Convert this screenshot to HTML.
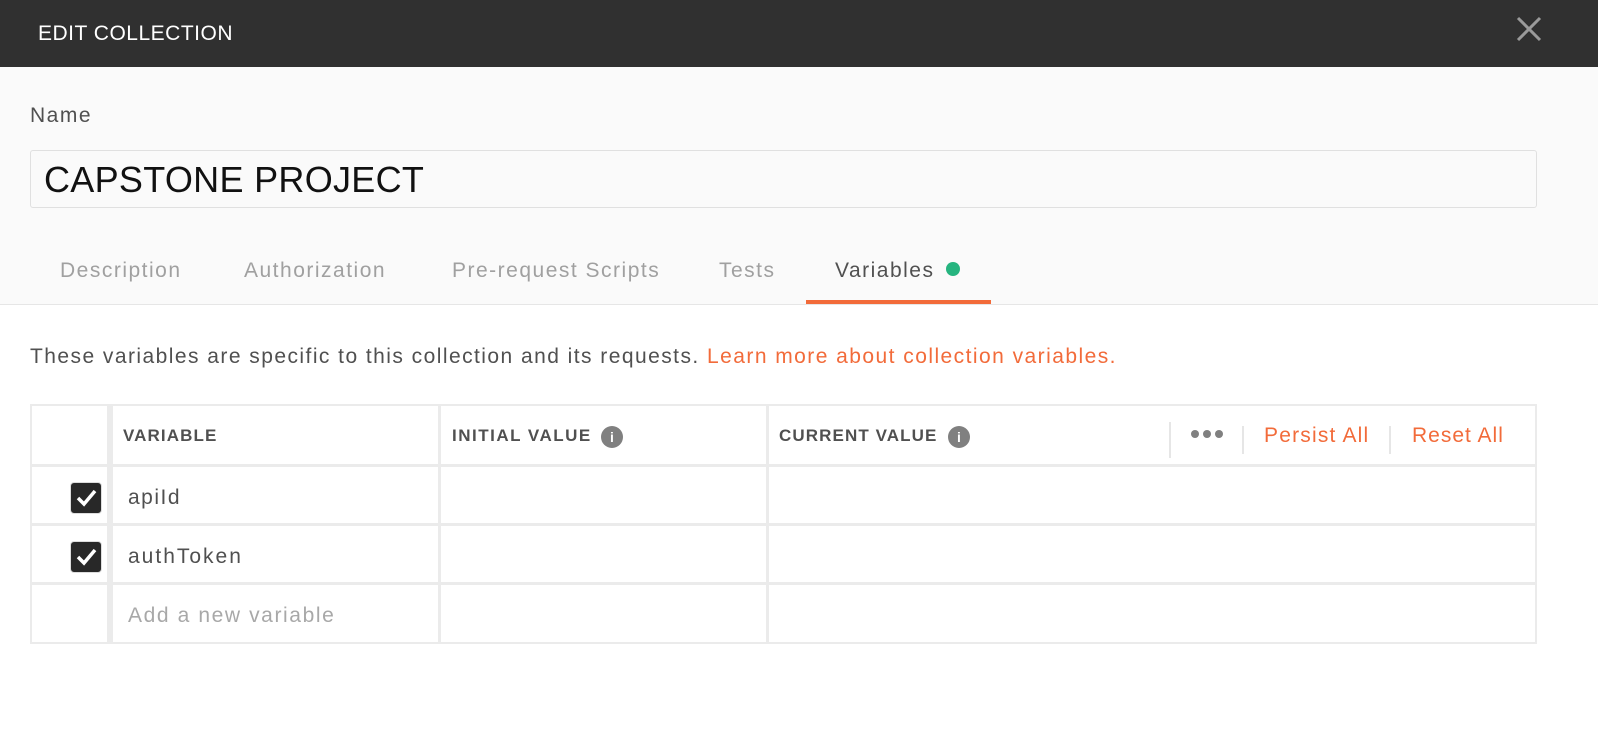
<!DOCTYPE html>
<html><head><style>
*{box-sizing:border-box;margin:0;padding:0}
body{width:1598px;height:738px;background:#fff;font-family:"Liberation Sans",sans-serif;position:relative;overflow:hidden;color:#505050}
.a{position:absolute}
.hdr{left:0;top:0;width:1598px;height:67px;background:#303030;color:#fff;font-size:21px;line-height:67px;padding-left:38px;letter-spacing:0.5px}
.top{left:0;top:67px;width:1598px;height:238px;background:#fafafa;border-bottom:1px solid #e6e6e6}
.tab{top:259px;font-size:21px;color:#a0a0a0;letter-spacing:1.5px}
.cell{position:absolute;background:#fff}
.chk{position:absolute;width:32px;height:32px;background:#282828;border-radius:4px;border:1px solid #ddd}
.th{font-size:17px;font-weight:bold;color:#505050;top:426px}
</style></head><body>
<div class="a hdr">EDIT COLLECTION</div>
<svg class="a" style="left:1516px;top:16px" width="26" height="26"><path d="M2 2L24 24M24 2L2 24" stroke="#9a9a9a" stroke-width="3"/></svg>
<div class="a top"></div>
<div class="a" style="left:30px;top:104px;font-size:21px;color:#505050;letter-spacing:1.5px">Name</div>
<div class="a" style="left:30px;top:150px;width:1507px;height:58px;border:1px solid #e0e0e0;border-radius:3px;background:#fafafa;font-size:36px;color:#111;line-height:58px;padding-left:13px;letter-spacing:0.3px">CAPSTONE PROJECT</div>
<div class="a tab" style="left:60px">Description</div>
<div class="a tab" style="left:244px">Authorization</div>
<div class="a tab" style="left:452px">Pre-request Scripts</div>
<div class="a tab" style="left:719px">Tests</div>
<div class="a tab" style="left:835px;color:#505050">Variables</div>
<div class="a" style="left:946px;top:262px;width:14px;height:14px;border-radius:50%;background:#26b47f"></div>
<div class="a" style="left:806px;top:300px;width:185px;height:4px;background:#f26b3a"></div>
<div class="a" style="left:30px;top:345px;font-size:21px;color:#505050;letter-spacing:1.45px;white-space:nowrap">These variables are specific to this collection and its requests. <span style="color:#f26b3a">Learn more about collection variables.</span></div>
<div class="a" style="left:30px;top:404px;width:1507px;height:240px;background:#ebebeb">
 <div class="cell" style="left:2px;top:2px;width:75px;height:58px"></div>
 <div class="cell" style="left:83px;top:2px;width:325px;height:58px"></div>
 <div class="cell" style="left:411px;top:2px;width:325px;height:58px"></div>
 <div class="cell" style="left:739px;top:2px;width:766px;height:58px"></div>
 <div class="cell" style="left:2px;top:63px;width:75px;height:56px"></div>
 <div class="cell" style="left:83px;top:63px;width:325px;height:56px"></div>
 <div class="cell" style="left:411px;top:63px;width:325px;height:56px"></div>
 <div class="cell" style="left:739px;top:63px;width:766px;height:56px"></div>
 <div class="cell" style="left:2px;top:122px;width:75px;height:56px"></div>
 <div class="cell" style="left:83px;top:122px;width:325px;height:56px"></div>
 <div class="cell" style="left:411px;top:122px;width:325px;height:56px"></div>
 <div class="cell" style="left:739px;top:122px;width:766px;height:56px"></div>
 <div class="cell" style="left:2px;top:181px;width:75px;height:57px"></div>
 <div class="cell" style="left:83px;top:181px;width:325px;height:57px"></div>
 <div class="cell" style="left:411px;top:181px;width:325px;height:57px"></div>
 <div class="cell" style="left:739px;top:181px;width:766px;height:57px"></div>
</div>
<div class="a th" style="left:123px;letter-spacing:1.1px">VARIABLE</div>
<div class="a th" style="left:452px;letter-spacing:1.5px">INITIAL VALUE</div>
<div class="a" style="left:601px;top:426px;width:22px;height:22px;border-radius:50%;background:#808080;color:#fff;font-size:14px;font-weight:bold;text-align:center;line-height:22px">i</div>
<div class="a th" style="left:779px;letter-spacing:1.1px">CURRENT VALUE</div>
<div class="a" style="left:948px;top:426px;width:22px;height:22px;border-radius:50%;background:#808080;color:#fff;font-size:14px;font-weight:bold;text-align:center;line-height:22px">i</div>
<div class="a" style="left:1169px;top:422px;width:2px;height:36px;background:#e6e6e6"></div>
<div class="a" style="left:1242px;top:426px;width:2px;height:28px;background:#e6e6e6"></div>
<div class="a" style="left:1389px;top:426px;width:2px;height:28px;background:#e6e6e6"></div>
<svg class="a" style="left:1190px;top:428px" width="34" height="12"><circle cx="5" cy="6" r="4" fill="#808080"/><circle cx="17" cy="6" r="4" fill="#808080"/><circle cx="29" cy="6" r="4" fill="#808080"/></svg>
<div class="a" style="left:1264px;top:424px;font-size:21px;color:#f26b3a;letter-spacing:1.2px">Persist All</div>
<div class="a" style="left:1412px;top:424px;font-size:21px;color:#f26b3a;letter-spacing:1px">Reset All</div>
<div class="chk" style="left:70px;top:482px"></div>
<svg class="a" style="left:70px;top:482px" width="32" height="32"><path d="M8 16l6 6 11-13" stroke="#fff" stroke-width="3.5" fill="none"/></svg>
<div class="chk" style="left:70px;top:541px"></div>
<svg class="a" style="left:70px;top:541px" width="32" height="32"><path d="M8 16l6 6 11-13" stroke="#fff" stroke-width="3.5" fill="none"/></svg>
<div class="a" style="left:128px;top:486px;font-size:21px;color:#505050;letter-spacing:1.5px">apiId</div>
<div class="a" style="left:128px;top:545px;font-size:21px;color:#505050;letter-spacing:2px">authToken</div>
<div class="a" style="left:128px;top:604px;font-size:21px;color:#a8a8a8;letter-spacing:1.6px">Add a new variable</div>
</body></html>
